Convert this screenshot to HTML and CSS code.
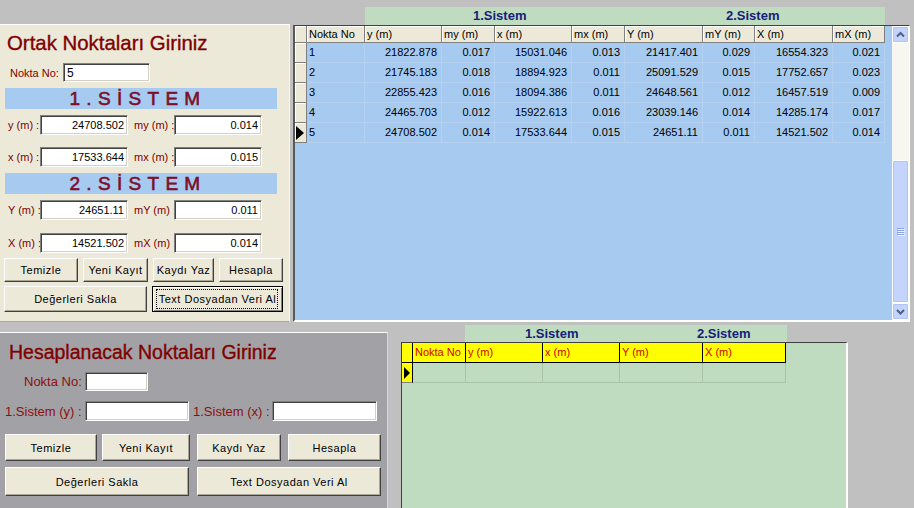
FILE: index.html
```html
<!DOCTYPE html>
<html lang="tr">
<head>
<meta charset="utf-8">
<title>Koordinat Dönüşümü</title>
<link rel="stylesheet" href="styles.css">
</head>
<body>
<div class="app">
  <div class="top">
    <section class="panel-a">
      <h1 class="title">Ortak Noktaları Giriniz</h1>
      <div class="row row-no"><span class="lbl lbl-no">Nokta No:</span><span class="field f-no">5</span></div>
      <div class="band">1.SİSTEM</div>
      <div class="row pair r-y"><span class="lbl l1">y (m) :</span><span class="field f-val">24708.502</span><span class="lbl l2">my (m) :</span><span class="field f-val">0.014</span></div>
      <div class="row pair r-x"><span class="lbl l1">x (m) :</span><span class="field f-val">17533.644</span><span class="lbl l2">mx (m) :</span><span class="field f-val">0.015</span></div>
      <div class="band">2.SİSTEM</div>
      <div class="row pair r-y"><span class="lbl l1">Y (m) :</span><span class="field f-val">24651.11</span><span class="lbl l2">mY (m) :</span><span class="field f-val">0.011</span></div>
      <div class="row pair r-X"><span class="lbl l1">X (m) :</span><span class="field f-val">14521.502</span><span class="lbl l2">mX (m) :</span><span class="field f-val">0.014</span></div>
      <div class="btns b1">
        <button class="btn w-temizle">Temizle</button>
        <button class="btn w-yeni">Yeni Kayıt</button>
        <button class="btn w-kaydi">Kaydı Yaz</button>
        <button class="btn w-hesap">Hesapla</button>
      </div>
      <div class="btns b2">
        <button class="btn w-sakla">Değerleri Sakla</button>
        <button class="btn w-text focus">Text Dosyadan Veri Al</button>
      </div>
    </section>

    <section class="grid-a">
      <div class="groups groups-a"><span class="gname">1.Sistem</span><span class="gname">2.Sistem</span></div>
      <div class="sheet-a">
        <div class="table-a">
          <div class="th sel"></div><div class="th">Nokta No</div><div class="th">y (m)</div><div class="th">my (m)</div><div class="th">x (m)</div><div class="th">mx (m)</div><div class="th">Y (m)</div><div class="th">mY (m)</div><div class="th">X (m)</div><div class="th">mX (m)</div>

          <div class="sel"></div><div class="td no">1</div><div class="td">21822.878</div><div class="td">0.017</div><div class="td">15031.046</div><div class="td">0.013</div><div class="td">21417.401</div><div class="td">0.029</div><div class="td">16554.323</div><div class="td">0.021</div>

          <div class="sel"></div><div class="td no">2</div><div class="td">21745.183</div><div class="td">0.018</div><div class="td">18894.923</div><div class="td">0.011</div><div class="td">25091.529</div><div class="td">0.015</div><div class="td">17752.657</div><div class="td">0.023</div>

          <div class="sel"></div><div class="td no">3</div><div class="td">22855.423</div><div class="td">0.016</div><div class="td">18094.386</div><div class="td">0.011</div><div class="td">24648.561</div><div class="td">0.012</div><div class="td">16457.519</div><div class="td">0.009</div>

          <div class="sel"></div><div class="td no">4</div><div class="td">24465.703</div><div class="td">0.012</div><div class="td">15922.613</div><div class="td">0.016</div><div class="td">23039.146</div><div class="td">0.014</div><div class="td">14285.174</div><div class="td">0.017</div>

          <div class="sel"><span class="arrow"></span></div><div class="td no">5</div><div class="td">24708.502</div><div class="td">0.014</div><div class="td">17533.644</div><div class="td">0.015</div><div class="td">24651.11</div><div class="td">0.011</div><div class="td">14521.502</div><div class="td">0.014</div>
        </div>
        <div class="fill-a"></div>
        <div class="scroll">
          <div class="sb-btn"><svg width="13" height="13" viewBox="0 0 13 13"><path d="M3 8.5 L6.5 5 L10 8.5" fill="none" stroke="#4d6185" stroke-width="2"/></svg></div>
          <div class="sb-track"></div>
          <div class="sb-thumb"><svg width="8" height="8" viewBox="0 0 8 8"><path d="M0 0.5H7M0 2.5H7M0 4.5H7M0 6.5H7" stroke="#8aa2e0" stroke-width="1"/><path d="M1 1.5H8M1 3.5H8M1 5.5H8M1 7.5H8" stroke="#eef3ff" stroke-width="1"/></svg></div>
          <div class="sb-btn"><svg width="13" height="13" viewBox="0 0 13 13"><path d="M3 5 L6.5 8.5 L10 5" fill="none" stroke="#4d6185" stroke-width="2"/></svg></div>
        </div>
      </div>
    </section>
  </div>

  <div class="bottom">
    <section class="panel-b">
      <h1 class="title title-b">Hesaplanacak Noktaları Giriniz</h1>
      <div class="row row-no-b"><span class="lbl-b lbl-no-b">Nokta No:</span><span class="field f-no-b"></span></div>
      <div class="row row-sis"><span class="lbl-b ls1">1.Sistem (y) :</span><span class="field f-sy"></span><span class="lbl-b ls2">1.Sistem (x) :</span><span class="field f-sx"></span></div>
      <div class="btns b3">
        <button class="btn w-temizle-b">Temizle</button>
        <button class="btn w-yeni-b">Yeni Kayıt</button>
        <button class="btn w-kaydi-b">Kaydı Yaz</button>
        <button class="btn w-hesap-b">Hesapla</button>
      </div>
      <div class="btns b4">
        <button class="btn w-half">Değerleri Sakla</button>
        <button class="btn w-half">Text Dosyadan Veri Al</button>
      </div>
    </section>

    <section class="grid-b">
      <div class="groups groups-b"><span class="gname">1.Sistem</span><span class="gname">2.Sistem</span></div>
      <div class="sheet-b">
        <div class="table-b">
          <div class="yh ysel"></div><div class="yh">Nokta No</div><div class="yh">y (m)</div><div class="yh">x (m)</div><div class="yh">Y (m)</div><div class="yh">X (m)</div>
          <div class="ysel yrow"><span class="arrow-b"></span></div><div class="gd"></div><div class="gd"></div><div class="gd"></div><div class="gd"></div><div class="gd"></div>
        </div>
      </div>
    </section>
  </div>
</div>
</body>
</html>
```

FILE: styles.css
```css
* { box-sizing: border-box; }

html, body {
  margin: 0;
  padding: 0;
}

body {
  background: #c0c0c0;
  width: 914px;
  height: 508px;
  overflow: hidden;
  font-family: "Liberation Sans", Arial, sans-serif;
}

.app {
  display: flex;
  flex-direction: column;
  width: 914px;
  height: 508px;
}

.top {
  display: flex;
  height: 322px;
  flex: none;
}

/* ---------- upper-left panel ---------- */
.panel-a {
  margin-top: 24px;
  width: 290px;
  height: 298px;
  background: #ece9d8;
  border-top: 1px solid #ffffff;
  border-right: 1px solid #f6f5ef;
  border-bottom: 1px solid #aca899;
  display: flex;
  flex-direction: column;
}

.title {
  margin: 6px 0 0 7px;
  height: 24px;
  font-size: 20.4px;
  line-height: 24px;
  font-weight: normal;
  color: #800000;
  -webkit-text-stroke: 0.35px #800000;
  white-space: nowrap;
  flex: none;
}

.row {
  display: flex;
  align-items: center;
  flex: none;
}

.lbl {
  font-size: 11px;
  color: #800000;
  white-space: nowrap;
}

.field {
  height: 100%;
  background: #ffffff;
  border-top: 1px solid #808080;
  border-left: 1px solid #808080;
  border-right: 1px solid #ffffff;
  border-bottom: 1px solid #ffffff;
  box-shadow: inset 1px 1px 0 #404040, inset -1px -1px 0 #d4d0c8;
  font-size: 11px;
  color: #000;
  display: flex;
  align-items: center;
  justify-content: flex-end;
  padding: 0 3px;
  white-space: nowrap;
}

.row-no {
  margin-top: 8px;
  height: 19px;
  padding-left: 10px;
}

.lbl-no { width: 53px; }

.f-no {
  width: 87px;
  justify-content: flex-start;
  font-size: 12px;
}

.band {
  margin: 6px 0 0 5px;
  width: 272px;
  height: 21px;
  flex: none;
  background: #a6caf0;
  color: #7d0f28;
  font-size: 19px;
  font-weight: normal;
  -webkit-text-stroke: 0.6px #7d0f28;
  letter-spacing: 6.3px;
  line-height: 21px;
  text-align: center;
  padding-right: 6px;
}

.pair {
  height: 20px;
  padding-left: 8px;
}

.pair .l1 { width: 32px; }
.pair .l2 { width: 40px; margin-left: 6px; }
.f-val { width: 88px; }

.r-y { margin-top: 6px; }
.r-x { margin-top: 12px; }
.r-X { margin-top: 13px; }

/* ---------- buttons ---------- */
.btns {
  display: flex;
  flex: none;
}

.btn {
  height: 100%;
  margin: 0;
  padding: 0;
  background: #ece9d8;
  border: 1px solid;
  border-color: #ffffff #404040 #404040 #ffffff;
  box-shadow: inset -1px -1px 0 #aca899;
  font-family: "Liberation Sans", Arial, sans-serif;
  font-size: 11px;
  font-weight: 400;
  letter-spacing: 0.5px;
  color: #000;
  white-space: nowrap;
}

.b1 { margin-top: 5px; height: 24px; padding-left: 4px; gap: 5px; }
.b2 { margin-top: 4px; height: 26px; padding-left: 4px; gap: 5px; }

.w-temizle { width: 74px; }
.w-yeni { width: 65px; }
.w-kaydi { width: 61px; }
.w-hesap { width: 64px; }
.w-sakla { width: 143px; }
.w-text { width: 131px; }

.focus {
  position: relative;
  border: 1px solid #000;
  box-shadow: inset 1px 1px 0 #ffffff, inset -1px -1px 0 #808080;
}

.focus::after {
  content: "";
  position: absolute;
  left: 3px;
  right: 4px;
  top: 2px;
  bottom: 2px;
  border: 1px dotted #000;
}

/* ---------- upper grid ---------- */
.grid-a {
  margin-left: 3px;
  width: 617px;
  height: 322px;
  padding-top: 7px;
  display: flex;
  flex-direction: column;
}

.groups {
  display: flex;
  flex: none;
  background: #c0dcc0;
  font-weight: bold;
  font-size: 13px;
  color: #15207a;
  white-space: nowrap;
}

.gname { width: 54px; }

.groups-a {
  margin-left: 72px;
  width: 520px;
  height: 18px;
  line-height: 18px;
  padding-left: 108px;
  gap: 199px;
}

.sheet-a {
  flex: 1;
  display: flex;
  background: #a6caf0;
  border-top: 1px solid #404040;
  border-left: 2px solid #5a5a5a;
  border-right: 1px solid #ffffff;
  border-bottom: 2px solid #ffffff;
}

.table-a {
  display: grid;
  grid-template-columns: 12px 58px 77px 53px 77px 53px 78px 52px 78px 52px;
  grid-template-rows: 17px;
  grid-auto-rows: 20px;
  align-content: start;
  flex: none;
}

.th {
  background: #ece9d8;
  border-right: 1px solid #808080;
  border-bottom: 1px solid #808080;
  box-shadow: inset 1px 1px 0 #ffffff;
  font-size: 11px;
  line-height: 16px;
  padding-left: 2px;
  white-space: nowrap;
  overflow: hidden;
}

.sel {
  background: #ece9d8;
  border-right: 1px solid #808080;
  border-bottom: 1px solid #808080;
  box-shadow: inset 1px 1px 0 #ffffff;
  display: flex;
  align-items: center;
  padding-left: 1px;
}

.th.sel { padding-left: 0; }

.arrow {
  width: 0;
  height: 0;
  border-left: 8px solid #000;
  border-top: 7px solid transparent;
  border-bottom: 7px solid transparent;
}

.td {
  border-right: 1px solid #b4d1f1;
  border-bottom: 1px solid #b4d1f1;
  font-size: 11px;
  line-height: 19px;
  text-align: right;
  padding-right: 4px;
  white-space: nowrap;
}

.td.no {
  text-align: left;
  padding-left: 2px;
}

.fill-a {
  width: 7px;
  flex: none;
}

.scroll {
  width: 17px;
  flex: none;
  display: flex;
  flex-direction: column;
  background: #f7f6f1;
}

.sb-btn {
  height: 17px;
  flex: none;
  background: #c4d3fb;
  border: 1px solid #ffffff;
  border-radius: 2px;
  box-shadow: inset 0 0 0 1px #b2c5f2;
  display: flex;
  align-items: center;
  justify-content: center;
}

.sb-track { flex: 1; }

.sb-thumb {
  height: 143px;
  flex: none;
  background: #c4d4fc;
  border: 1px solid #ffffff;
  border-radius: 2px;
  box-shadow: inset 0 0 0 1px #b2c5f2;
  display: flex;
  align-items: center;
  justify-content: center;
}

/* ---------- bottom ---------- */
.bottom {
  display: flex;
  flex: 1;
}

.panel-b {
  margin-top: 10px;
  width: 388px;
  background: #a2a2a6;
  border-top: 1px solid #ffffff;
  border-right: 1px solid #d6d6d6;
  display: flex;
  flex-direction: column;
}

.title-b {
  margin: 7px 0 0 9px;
  font-size: 19.5px;
}

.lbl-b {
  font-size: 13px;
  color: #8b1010;
  white-space: nowrap;
}

.row-no-b {
  margin-top: 8px;
  height: 19px;
  padding-left: 24px;
}

.lbl-no-b { width: 61px; }
.f-no-b { width: 63px; }

.row-sis {
  margin-top: 10px;
  height: 20px;
  padding-left: 5px;
}

.ls1 { width: 80px; }
.ls2 { width: 79px; margin-left: 4px; }
.f-sy { width: 104px; }
.f-sx { width: 105px; }

.b3 { margin-top: 13px; height: 27px; padding-left: 5px; }
.b4 { margin-top: 6px; height: 29px; padding-left: 5px; gap: 8px; }

.w-temizle-b { width: 92px; }
.w-yeni-b { width: 88px; margin-left: 5px; }
.w-kaydi-b { width: 84px; margin-left: 7px; }
.w-hesap-b { width: 93px; margin-left: 7px; }
.w-half { width: 184px; }

/* ---------- bottom grid ---------- */
.grid-b {
  margin-left: 13px;
  width: 447px;
  padding-top: 3px;
  display: flex;
  flex-direction: column;
}

.groups-b {
  margin-left: 64px;
  width: 322px;
  height: 17px;
  line-height: 17px;
  padding-left: 60px;
  gap: 118px;
}

.sheet-b {
  flex: 1;
  display: flex;
  background: #c0dcc0;
  border-top: 1px solid #404040;
  border-left: 1px solid #404040;
  border-right: 2px solid #ffffff;
}

.table-b {
  display: grid;
  grid-template-columns: 11px 53px 77px 77px 83px 83px;
  grid-template-rows: 20px 20px;
  align-content: start;
  flex: none;
}

.yh {
  background: #ffff00;
  border-right: 1px solid #000;
  border-bottom: 1px solid #000;
  color: #d00000;
  font-size: 11px;
  line-height: 19px;
  padding-left: 2px;
  white-space: nowrap;
  overflow: hidden;
}

.ysel { padding-left: 0; }

.yrow {
  background: #ffff00;
  border-right: 1px solid #000;
  border-bottom: 1px solid #808080;
  display: flex;
  align-items: center;
  padding-left: 2px;
}

.arrow-b {
  width: 0;
  height: 0;
  border-left: 6px solid #000;
  border-top: 6px solid transparent;
  border-bottom: 6px solid transparent;
}

.gd {
  border-right: 1px solid #a9c2a9;
  border-bottom: 1px solid #a9c2a9;
}
```
